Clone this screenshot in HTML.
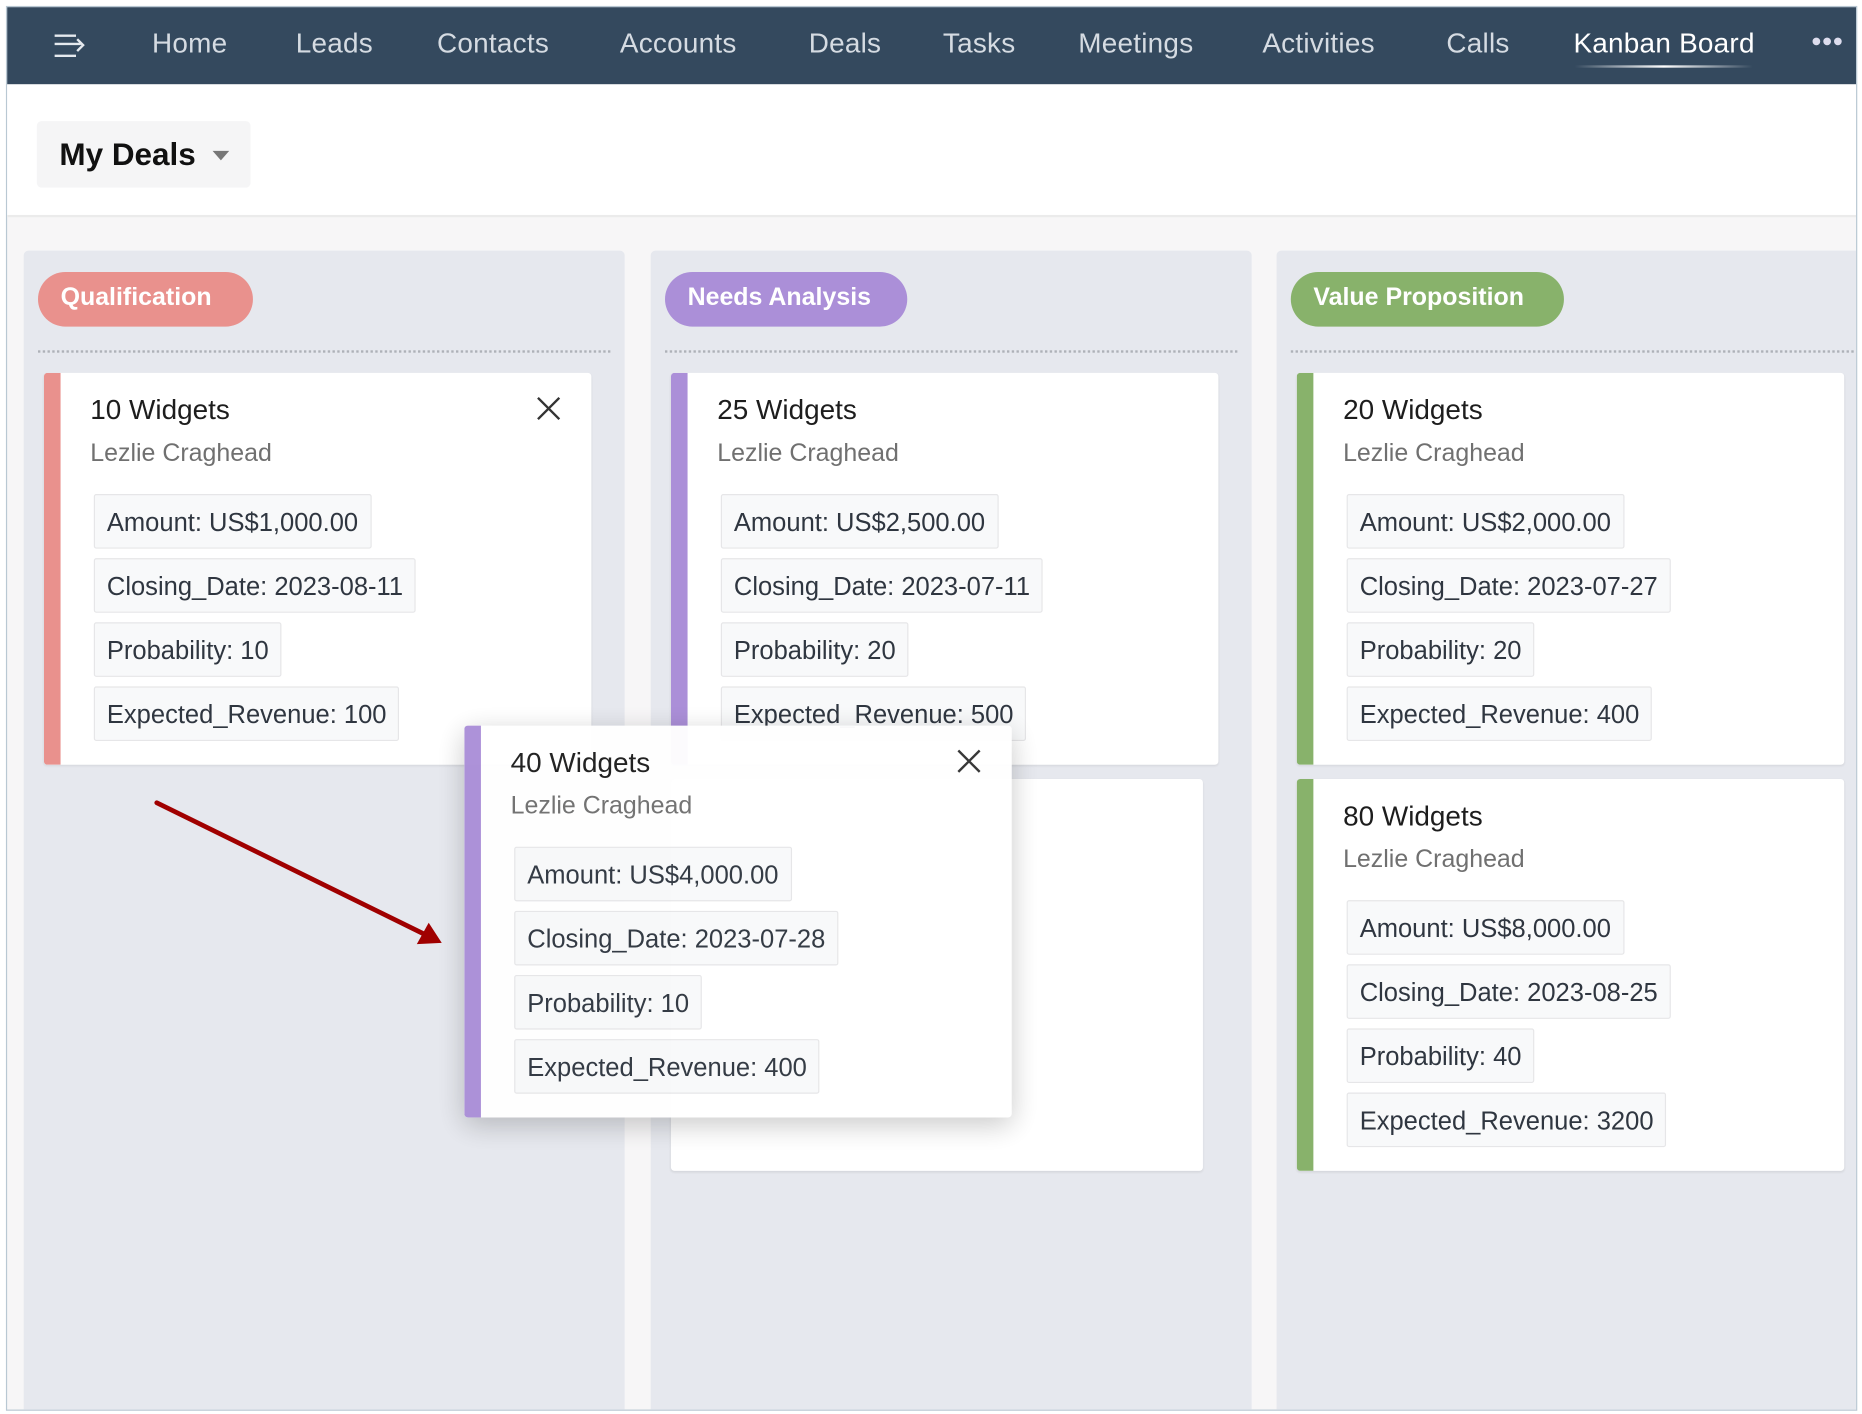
<!DOCTYPE html>
<html><head><meta charset="utf-8">
<style>
*{box-sizing:border-box;margin:0;padding:0}
html,body{width:1862px;height:1414px;overflow:hidden;background:#fff;font-family:"Liberation Sans",sans-serif}
#s{position:absolute;left:0;top:0;width:1568px;height:1191px;transform:scale(1.1875);transform-origin:0 0}
.frame{position:absolute;left:5px;top:5px;width:1559px;height:1183px;border:1px solid #b9c8d3;background:#f7f6f7;overflow:hidden}
.nav{position:absolute;left:0;top:0;width:100%;height:65px;background:#34495e}
.nav span{position:absolute;top:17px;font-size:23.5px;color:#d5dbe2;letter-spacing:0.2px}
.hdr{position:absolute;left:0;top:65px;width:100%;height:112px;background:#fff;border-bottom:2px solid #ebebeb}
.my{position:absolute;left:25px;top:31px;width:180px;height:56px;background:#f5f5f6;border-radius:4px;font-size:26.5px;font-weight:bold;color:#111;padding:13px 0 0 19px}
.my i{position:absolute;left:148px;top:25px;border-left:7px solid transparent;border-right:7px solid transparent;border-top:8px solid #777}
.col{position:absolute;top:205px;height:990px;background:#e6e8ee;border-radius:4px}
.pill{position:absolute;top:18px;height:46px;border-radius:23px;color:#fff;font-weight:bold;font-size:21px;padding:10px 0 0 19px}
.dot{position:absolute;top:84px;height:0;border-top:2px dotted #aeb1b8}
.card{position:absolute;width:461px;height:330px;background:#fff;border-radius:3px;box-shadow:0 1px 2px rgba(0,0,0,.08);overflow:hidden}
.card .bar{position:absolute;left:0;top:0;width:14px;height:100%}
.t{position:absolute;left:39px;top:18px;font-size:23.5px;color:#1d1d1d}
.n{position:absolute;left:39px;top:56px;font-size:21px;color:#707070}
.f{position:absolute;left:42px;height:46px;border:1px solid #e6e6e8;background:#f8f9fa;border-radius:2px;font-size:21.5px;color:#2f3640;padding:11px 10px 0 10px;white-space:nowrap}
.x{position:absolute;right:25px;top:19px;width:22px;height:22px}
</style></head><body><div id="s">
<div class="frame">
 <div class="nav">
  <svg style="position:absolute;left:39px;top:22px" width="28" height="22" viewBox="0 0 28 22" fill="none" stroke="#e5e9ee" stroke-width="2"><path d="M1 2h18M1 9h22M1 19h18M20 5l5 5-5 5"/></svg>
  <span style="left:122px">Home</span><span style="left:243px">Leads</span><span style="left:362px">Contacts</span><span style="left:516px">Accounts</span><span style="left:675px">Deals</span><span style="left:788px">Tasks</span><span style="left:902px">Meetings</span><span style="left:1057px">Activities</span><span style="left:1212px">Calls</span><span style="left:1319px;color:#fff">Kanban Board</span>
  <div style="position:absolute;left:1320px;top:49px;width:150px;height:2px;background:linear-gradient(90deg,rgba(255,255,255,0),#fff 50%,rgba(255,255,255,0))"></div>
  <span style="left:1519px;top:20px;font-size:15px;letter-spacing:0px;color:#dde">●●●</span>
 </div>
 <div class="hdr"><div class="my">My Deals<i></i></div></div>

 <div class="col" style="left:14px;width:506px">
  <div class="pill" style="left:12px;width:181px;background:#e9918d">Qualification</div>
  <div class="dot" style="left:12px;width:482px"></div>
  <div class="card" style="left:17px;top:103px"><div class="bar" style="background:#e9918d"></div>
   <div class="t">10 Widgets</div><div class="n">Lezlie Craghead</div>
   <svg class="x" viewBox="0 0 22 22" stroke="#333" stroke-width="2"><path d="M2 2l18 18M20 2L2 20"/></svg>
   <div class="f" style="top:102px">Amount: US$1,000.00</div><div class="f" style="top:156px">Closing_Date: 2023-08-11</div><div class="f" style="top:210px">Probability: 10</div><div class="f" style="top:264px">Expected_Revenue: 100</div>
  </div>
 </div>

 <div class="col" style="left:542px;width:506px">
  <div class="pill" style="left:12px;width:204px;background:#ab8fd8">Needs Analysis</div>
  <div class="dot" style="left:12px;width:482px"></div>
  <div class="card" style="left:17px;top:103px"><div class="bar" style="background:#ab8fd8"></div>
   <div class="t">25 Widgets</div><div class="n">Lezlie Craghead</div>
   <div class="f" style="top:102px">Amount: US$2,500.00</div><div class="f" style="top:156px">Closing_Date: 2023-07-11</div><div class="f" style="top:210px">Probability: 20</div><div class="f" style="top:264px">Expected_Revenue: 500</div>
  </div>
  <div class="card" style="left:17px;top:445px;width:448px"></div>
 </div>

 <div class="col" style="left:1069px;width:500px">
  <div class="pill" style="left:12px;width:230px;background:#88b26b">Value Proposition</div>
  <div class="dot" style="left:12px;width:482px"></div>
  <div class="card" style="left:17px;top:103px"><div class="bar" style="background:#88b26b"></div>
   <div class="t">20 Widgets</div><div class="n">Lezlie Craghead</div>
   <div class="f" style="top:102px">Amount: US$2,000.00</div><div class="f" style="top:156px">Closing_Date: 2023-07-27</div><div class="f" style="top:210px">Probability: 20</div><div class="f" style="top:264px">Expected_Revenue: 400</div>
  </div>
  <div class="card" style="left:17px;top:445px"><div class="bar" style="background:#88b26b"></div>
   <div class="t">80 Widgets</div><div class="n">Lezlie Craghead</div>
   <div class="f" style="top:102px">Amount: US$8,000.00</div><div class="f" style="top:156px">Closing_Date: 2023-08-25</div><div class="f" style="top:210px">Probability: 40</div><div class="f" style="top:264px">Expected_Revenue: 3200</div>
  </div>
 </div>

 <div class="card" style="left:385px;top:605px;box-shadow:0 6px 24px rgba(0,0,0,.22);opacity:.97"><div class="bar" style="background:#ab8fd8"></div>
  <div class="t">40 Widgets</div><div class="n">Lezlie Craghead</div>
  <svg class="x" viewBox="0 0 22 22" stroke="#333" stroke-width="2"><path d="M2 2l18 18M20 2L2 20"/></svg>
  <div class="f" style="top:102px">Amount: US$4,000.00</div><div class="f" style="top:156px">Closing_Date: 2023-07-28</div><div class="f" style="top:210px">Probability: 10</div><div class="f" style="top:264px">Expected_Revenue: 400</div>
 </div>

 <svg style="position:absolute;left:0;top:0" width="1559" height="1183"><path d="M126 670L352 781" stroke="#a00000" stroke-width="4" stroke-linecap="round"/><path d="M366 788L345 789L355 771Z" fill="#a00000"/></svg>
</div>
</div></body></html>
